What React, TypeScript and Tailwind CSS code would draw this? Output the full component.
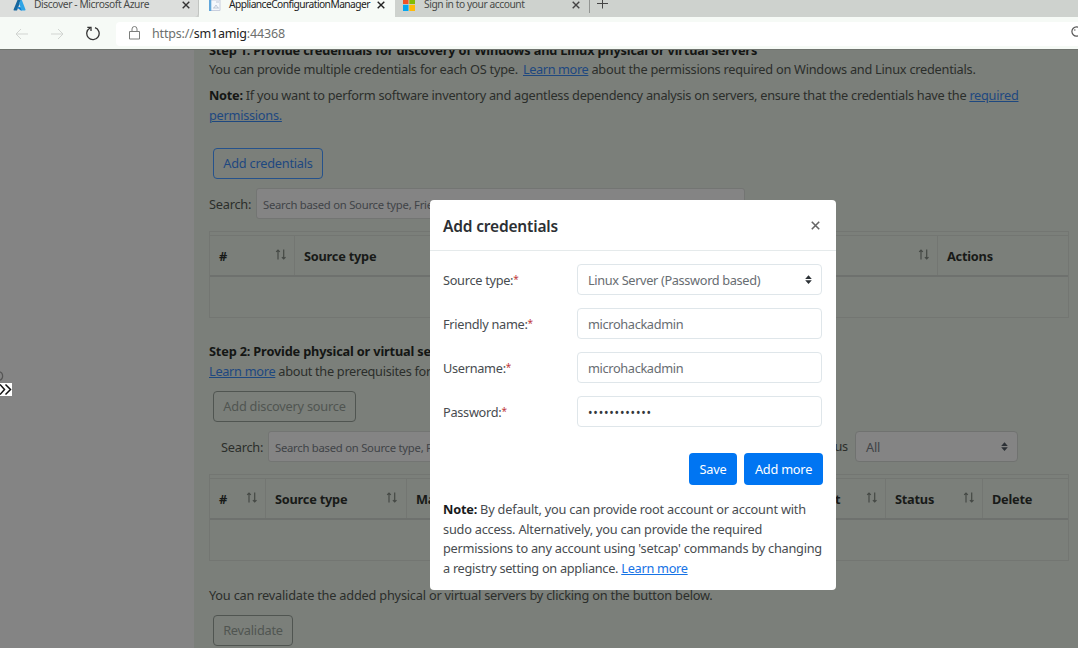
import type { ReactNode } from "react";

function Sort() {
  return (
    <svg className="h-[11px] w-[12px] shrink-0" viewBox="0 0 12 11" fill="none" stroke="#454945" strokeWidth="1.2">
      <path d="M3 10.5V1M1.2 2.8L3 1l1.8 1.8M8.7 0.5V10M6.9 8.2l1.8 1.8 1.8-1.8" />
    </svg>
  );
}

function Carets({ className = "" }: { className?: string }) {
  return (
    <svg className={`h-[9px] w-[7px] shrink-0 ${className}`} viewBox="0 0 7 9" fill="#2c3136">
      <path d="M0.2 3.9L3.5 0.2l3.3 3.7zM0.2 5.2h6.6L3.5 8.9z" />
    </svg>
  );
}

function Cross({ className }: { className: string }) {
  return (
    <svg className={className} viewBox="0 0 8 8" fill="none" stroke="currentColor" strokeWidth="1.4">
      <path d="M0.7 0.7l6.6 6.6M7.3 0.7L0.7 7.3" />
    </svg>
  );
}

function Head({ children, className, sort = true }: { children?: ReactNode; className: string; sort?: boolean }) {
  return (
    <div className={`flex items-center justify-between border-l border-[#737672] pl-[9px] font-bold text-[#181a18] ${className}`}>
      <span className="pt-[2px] whitespace-nowrap">{children}</span>
      {sort && <span className="pb-[3px]"><Sort /></span>}
    </div>
  );
}

function Table({ children }: { children: ReactNode }) {
  return (
    <div className="flex h-[87px] w-[860px] flex-col border border-[#737672]">
      <div className="h-[3px]" />
      <div className="flex h-[42px] border-t border-b-2 border-t-[#737672] border-b-[#6e716e]">{children}</div>
    </div>
  );
}

function Search() {
  return (
    <>
      <span className="w-[47px] shrink-0 pt-[2px]">Search:</span>
      <div className="flex h-[31px] w-[489px] shrink-0 items-center rounded-[3px] border border-[#737573] bg-[#848484] pt-[2px] pl-[6px] text-[11.25px] tracking-[-0.24px] text-[#404347]">
        Search based on Source type, Friendly name
      </div>
    </>
  );
}

function Field({ label, children }: { label: string; children: ReactNode }) {
  return (
    <div className="flex h-[31px] items-center">
      <label className="flex w-[134px] pt-[2px] whitespace-nowrap tracking-[-0.3px]">
        {label}
        <span className="mt-[-1px] text-[10px] text-[#c0393b]">*</span>
      </label>
      <div className="flex h-[31px] w-[245px] items-center rounded-[4px] border border-[#dfe6ea] pt-[2px] pl-[10px] tracking-[-0.35px] text-[#686d72]">
        {children}
      </div>
    </div>
  );
}

function Browser() {
  return (
    <header className="h-[49px] shrink-0 overflow-hidden bg-[#f6faf6] text-[10.25px] text-[#484a48]">
      <div className="flex h-[17px] bg-[#ced2ce]">
        <div className="flex h-[17px] w-[199px] items-start rounded-br-[4px] border-r border-[#c2c5c2] bg-[#dcdedc] pl-[13px]">
          <svg className="h-[11px] w-[13px]" viewBox="0 0 13 11">
            <path d="M4.5 0H8L4 10.5H1.2Q0.2 10.5 0.6 9.4z" fill="#17679e" />
            <path d="M7.8 0h1l3.7 9.5q.3 1-.7 1H8L4 7.3h3.5L6 3z" fill="#2fa4e6" />
            <path d="M4 7.3h3.2l1.5 3.2H8z" fill="#0b78cf" />
          </svg>
          <span className="mt-[-4px] ml-[8px] w-[148px] whitespace-nowrap leading-4 tracking-[-0.4px]">Discover - Microsoft Azure</span>
          <Cross className="mt-[1px] h-[8px] w-[8px] text-[#333]" />
        </div>
        <div className="flex h-[17px] w-[196px] items-start bg-[#f6faf6] pl-[10px]">
          <svg className="h-[11px] w-[13px]" viewBox="0 0 13 11">
            <path d="M1 0h10v10.5H1z" fill="#f4f7fc" stroke="#c8cede" />
            <path d="M0 0h2.3v11H0z" fill="#61a7db" />
            <path d="M4 8h6M5 8l2-3 2 3M7 2h3" stroke="#bdc7d7" fill="none" />
          </svg>
          <span className="mt-[-4px] ml-[7px] w-[148px] whitespace-nowrap leading-4 tracking-[-0.56px] text-[#222]">ApplianceConfigurationManager</span>
          <Cross className="mt-[1px] h-[8px] w-[8px] text-[#222]" />
        </div>
        <div className="flex h-[17px] flex-1 items-start rounded-bl-[4px] bg-[#ced2ce] pl-[8px]">
          <svg className="h-[11px] w-[12px]" viewBox="0 0 12 11">
            <path d="M0 0h5.5v4H0z" fill="#f35325" />
            <path d="M6.3 0H12v4H6.3z" fill="#81bc06" />
            <path d="M0 4.8h5.5V11H0z" fill="#05a6f0" />
            <path d="M6.3 4.8H12V11H6.3z" fill="#ffba08" />
          </svg>
          <span className="mt-[-4px] ml-[9px] w-[148px] whitespace-nowrap leading-4 tracking-[-0.44px]">Sign in to your account</span>
          <Cross className="mt-[1px] h-[8px] w-[8px] text-[#444]" />
          <div className="ml-[9px] h-[13px] w-px bg-[#929592]" />
          <svg className="ml-[7px] h-[10px] w-[11px]" viewBox="0 0 11 10" stroke="#444">
            <path d="M0 3.5h11M5.5-1v9.5" />
          </svg>
        </div>
      </div>
      <div className="flex h-[32px] items-center pt-[1px]">
        <svg className="ml-[15px] h-[12px] w-[13px]" viewBox="0 0 13 12" fill="none" stroke="#d1d4d1">
          <path d="M13 6H1M6 1L1 6l5 5" />
        </svg>
        <svg className="ml-[23px] h-[12px] w-[13px]" viewBox="0 0 13 12" fill="none" stroke="#d1d4d1">
          <path d="M0 6h12M7 1l5 5-5 5" />
        </svg>
        <svg className="ml-[22px] h-[15px] w-[14px]" viewBox="0 0 14 15" fill="none" stroke="#333" strokeWidth="1.3">
          <path d="M9 1.6A6.2 6.2 0 1 1 4 2M1.3 1.3H5V5" />
        </svg>
        <div className="ml-[16px] flex h-[24px] flex-1 items-center rounded-l-[4px] bg-white pl-[13px]">
          <svg className="mb-[1px] h-[14px] w-[11px]" viewBox="0 0 11 14" fill="none" stroke="#7c7e7c">
            <path d="M0.5 5.5h10v7.5h-10zM3 5.5V3a2.5 2.5 0 0 1 5 0v2.5" />
          </svg>
          <span className="ml-[12px] whitespace-nowrap text-[12.5px] tracking-[-0.18px] text-[#6d706d]">
            https://<span className="text-[#222]">sm1amig</span>:44368
          </span>
          <svg className="mr-[-4px] mb-[4px] ml-auto h-[11px] w-[11px]" viewBox="0 0 11 11" fill="none" stroke="#555" strokeWidth="1.2">
            <circle cx="5.5" cy="5.5" r="4.6" />
            <path d="M3 4h1.5" />
          </svg>
        </div>
      </div>
    </header>
  );
}

function CredentialsDialog() {
  return (
    <section className="absolute top-[200px] left-[430px] h-[390px] w-[406px] rounded-[4px] bg-white text-[#484c50]">
      <div className="flex h-[51px] items-center justify-between border-b border-[#e5eaeb] pr-[16px] pl-[13px]">
        <h2 className="pt-[3px] whitespace-nowrap text-[15.5px] font-semibold tracking-[-0.17px] text-[#2c3034]">Add credentials</h2>
        <Cross className="h-[9px] w-[9px] text-[#666]" />
      </div>
      <div className="flex flex-col gap-[13px] pt-[13px] pl-[13px]">
        <Field label="Source type:">
          <span className="whitespace-nowrap">Linux Server (Password based)</span>
          <Carets className="mr-[9px] mb-[2px] ml-auto" />
        </Field>
        <Field label="Friendly name:">microhackadmin</Field>
        <Field label="Username:">microhackadmin</Field>
        <Field label="Password:">
          <span className="text-[12px] tracking-[0.81px] text-[#33373b]">••••••••••••</span>
        </Field>
      </div>
      <div className="mt-[26px] flex justify-end gap-[7px] pr-[13px] text-white">
        <button className="h-[32px] w-[48px] rounded-[4px] bg-[#0075f2] pt-[2px]">Save</button>
        <button className="h-[32px] w-[79px] whitespace-nowrap rounded-[4px] bg-[#0075f2] pt-[2px]">Add more</button>
      </div>
      <p className="mt-[15px] pl-[13px] whitespace-nowrap leading-[19.6px]">
        <span className="tracking-[-0.21px]"><b className="text-[#181a1c]">Note:</b> By default, you can provide root account or account with</span>
        <br />
        <span className="tracking-[-0.23px]">sudo access. Alternatively, you can provide the required</span>
        <br />
        <span className="tracking-[-0.25px]">permissions to any account using 'setcap' commands by changing</span>
        <br />
        <span className="tracking-[-0.29px]">a registry setting on appliance. <a className="text-[#1673e6] underline">Learn more</a></span>
      </p>
    </section>
  );
}

export default function App() {
  return (
    <div className="relative flex h-[648px] w-[1078px] flex-col overflow-hidden bg-[#848484] font-['Noto_Sans','Open_Sans',sans-serif] text-[12.75px] leading-[19.6px] tracking-[-0.22px]">
      <Browser />
      <div className="flex min-h-0 flex-1 border-t border-[#70746f]">
        <aside className="w-[194px] shrink-0 bg-[#848484] pt-[320px]">
          <svg className="h-[13px] w-[4px]" viewBox="0 0 4 13" fill="none" stroke="#555" strokeWidth="1.2">
            <path d="M-1 1.5a4.6 4.6 0 0 1 0 9" />
          </svg>
          <div className="h-[13px] w-[12px] bg-white">
            <svg className="h-[13px] w-[12px]" viewBox="0 0 12 13" fill="none" stroke="#111" strokeWidth="1.5">
              <path d="M0 1.5l4.5 5L0 11.5M5.5 1.5l5 5-5 5" />
            </svg>
          </div>
        </aside>
        <main className="flex min-w-0 flex-1 flex-col items-start overflow-hidden bg-[#7b7f7a] pl-[15px] whitespace-nowrap text-[#2b2e2b]">
          <div className="mt-[-9px] h-[19px] shrink-0 font-bold tracking-[-0.17px] text-[#141614]">
            Step 1: Provide credentials for discovery of Windows and Linux physical or virtual servers
          </div>
          <p className="h-[26px] shrink-0 tracking-[-0.245px]">
            You can provide multiple credentials for each OS type.{" "}
            <span className="ml-[2px] tracking-[-0.4px]"><a className="text-[#1e4880] underline">Learn more</a></span> about the permissions required on Windows and Linux credentials.
          </p>
          <p className="h-[62px] shrink-0 tracking-[-0.27px]">
            <b className="text-[#141614]">Note:</b> If you want to perform software inventory and agentless dependency analysis on servers, ensure that the credentials have the{" "}
            <a className="text-[#1e4880] underline">required<br />permissions.</a>
          </p>
          <button className="ml-[4px] h-[31px] w-[110px] shrink-0 rounded-[4px] border border-[#25528c] pt-px text-[#1e4880]">Add credentials</button>
          <div className="mt-[9px] flex h-[31px] shrink-0 items-center">
            <Search />
          </div>
          <div className="mt-[12px] shrink-0">
            <Table>
              <Head className="w-[84px] border-l-0 pr-[7px]">#</Head>
              <Head className="w-[336px] pr-[8px]">Source type</Head>
              <Head className="w-[307px] pr-[7px]" />
              <Head className="w-[131px]" sort={false}>Actions</Head>
            </Table>
          </div>
          <div className="mt-[24px] h-[20px] shrink-0 font-bold tracking-[-0.17px] text-[#141614]">Step 2: Provide physical or virtual server details</div>
          <p className="h-[29px] shrink-0 tracking-[-0.3px]"><a className="text-[#1e4880] underline">Learn more</a> about the prerequisites for discovery</p>
          <button className="ml-[4px] h-[31px] w-[143px] shrink-0 rounded-[4px] border border-[#505551] pt-px text-[#505551]">Add discovery source</button>
          <div className="mt-[9px] ml-[12px] flex h-[31px] shrink-0 items-center">
            <Search />
            <span className="w-[98px] shrink-0 pr-[7px] text-right">Status</span>
            <div className="flex h-[31px] w-[163px] items-center justify-between rounded-[4px] border border-[#707270] bg-[#848484] pt-[2px] pr-[9px] pl-[10px] text-[#404347]">
              All <Carets className="mb-[2px]" />
            </div>
          </div>
          <div className="mt-[12px] shrink-0">
            <Table>
              <Head className="w-[55px] border-l-0 pr-[7px]">#</Head>
              <Head className="w-[141px] pr-[8px]">Source type</Head>
              <Head className="w-[234px] pr-[7px]">Machine name</Head>
              <Head className="w-[245px] pr-[7px]"><span className="ml-[185px]">t</span></Head>
              <Head className="w-[97px] pr-[7px]">Status</Head>
              <Head className="w-[86px]" sort={false}>Delete</Head>
            </Table>
          </div>
          <p className="mt-[25px] h-[29px] shrink-0 tracking-[-0.21px]">You can revalidate the added physical or virtual servers by clicking on the button below.</p>
          <button className="ml-[4px] h-[31px] w-[80px] shrink-0 rounded-[4px] border border-[#505551] text-[#505551]">Revalidate</button>
        </main>
      </div>
      <CredentialsDialog />
    </div>
  );
}
